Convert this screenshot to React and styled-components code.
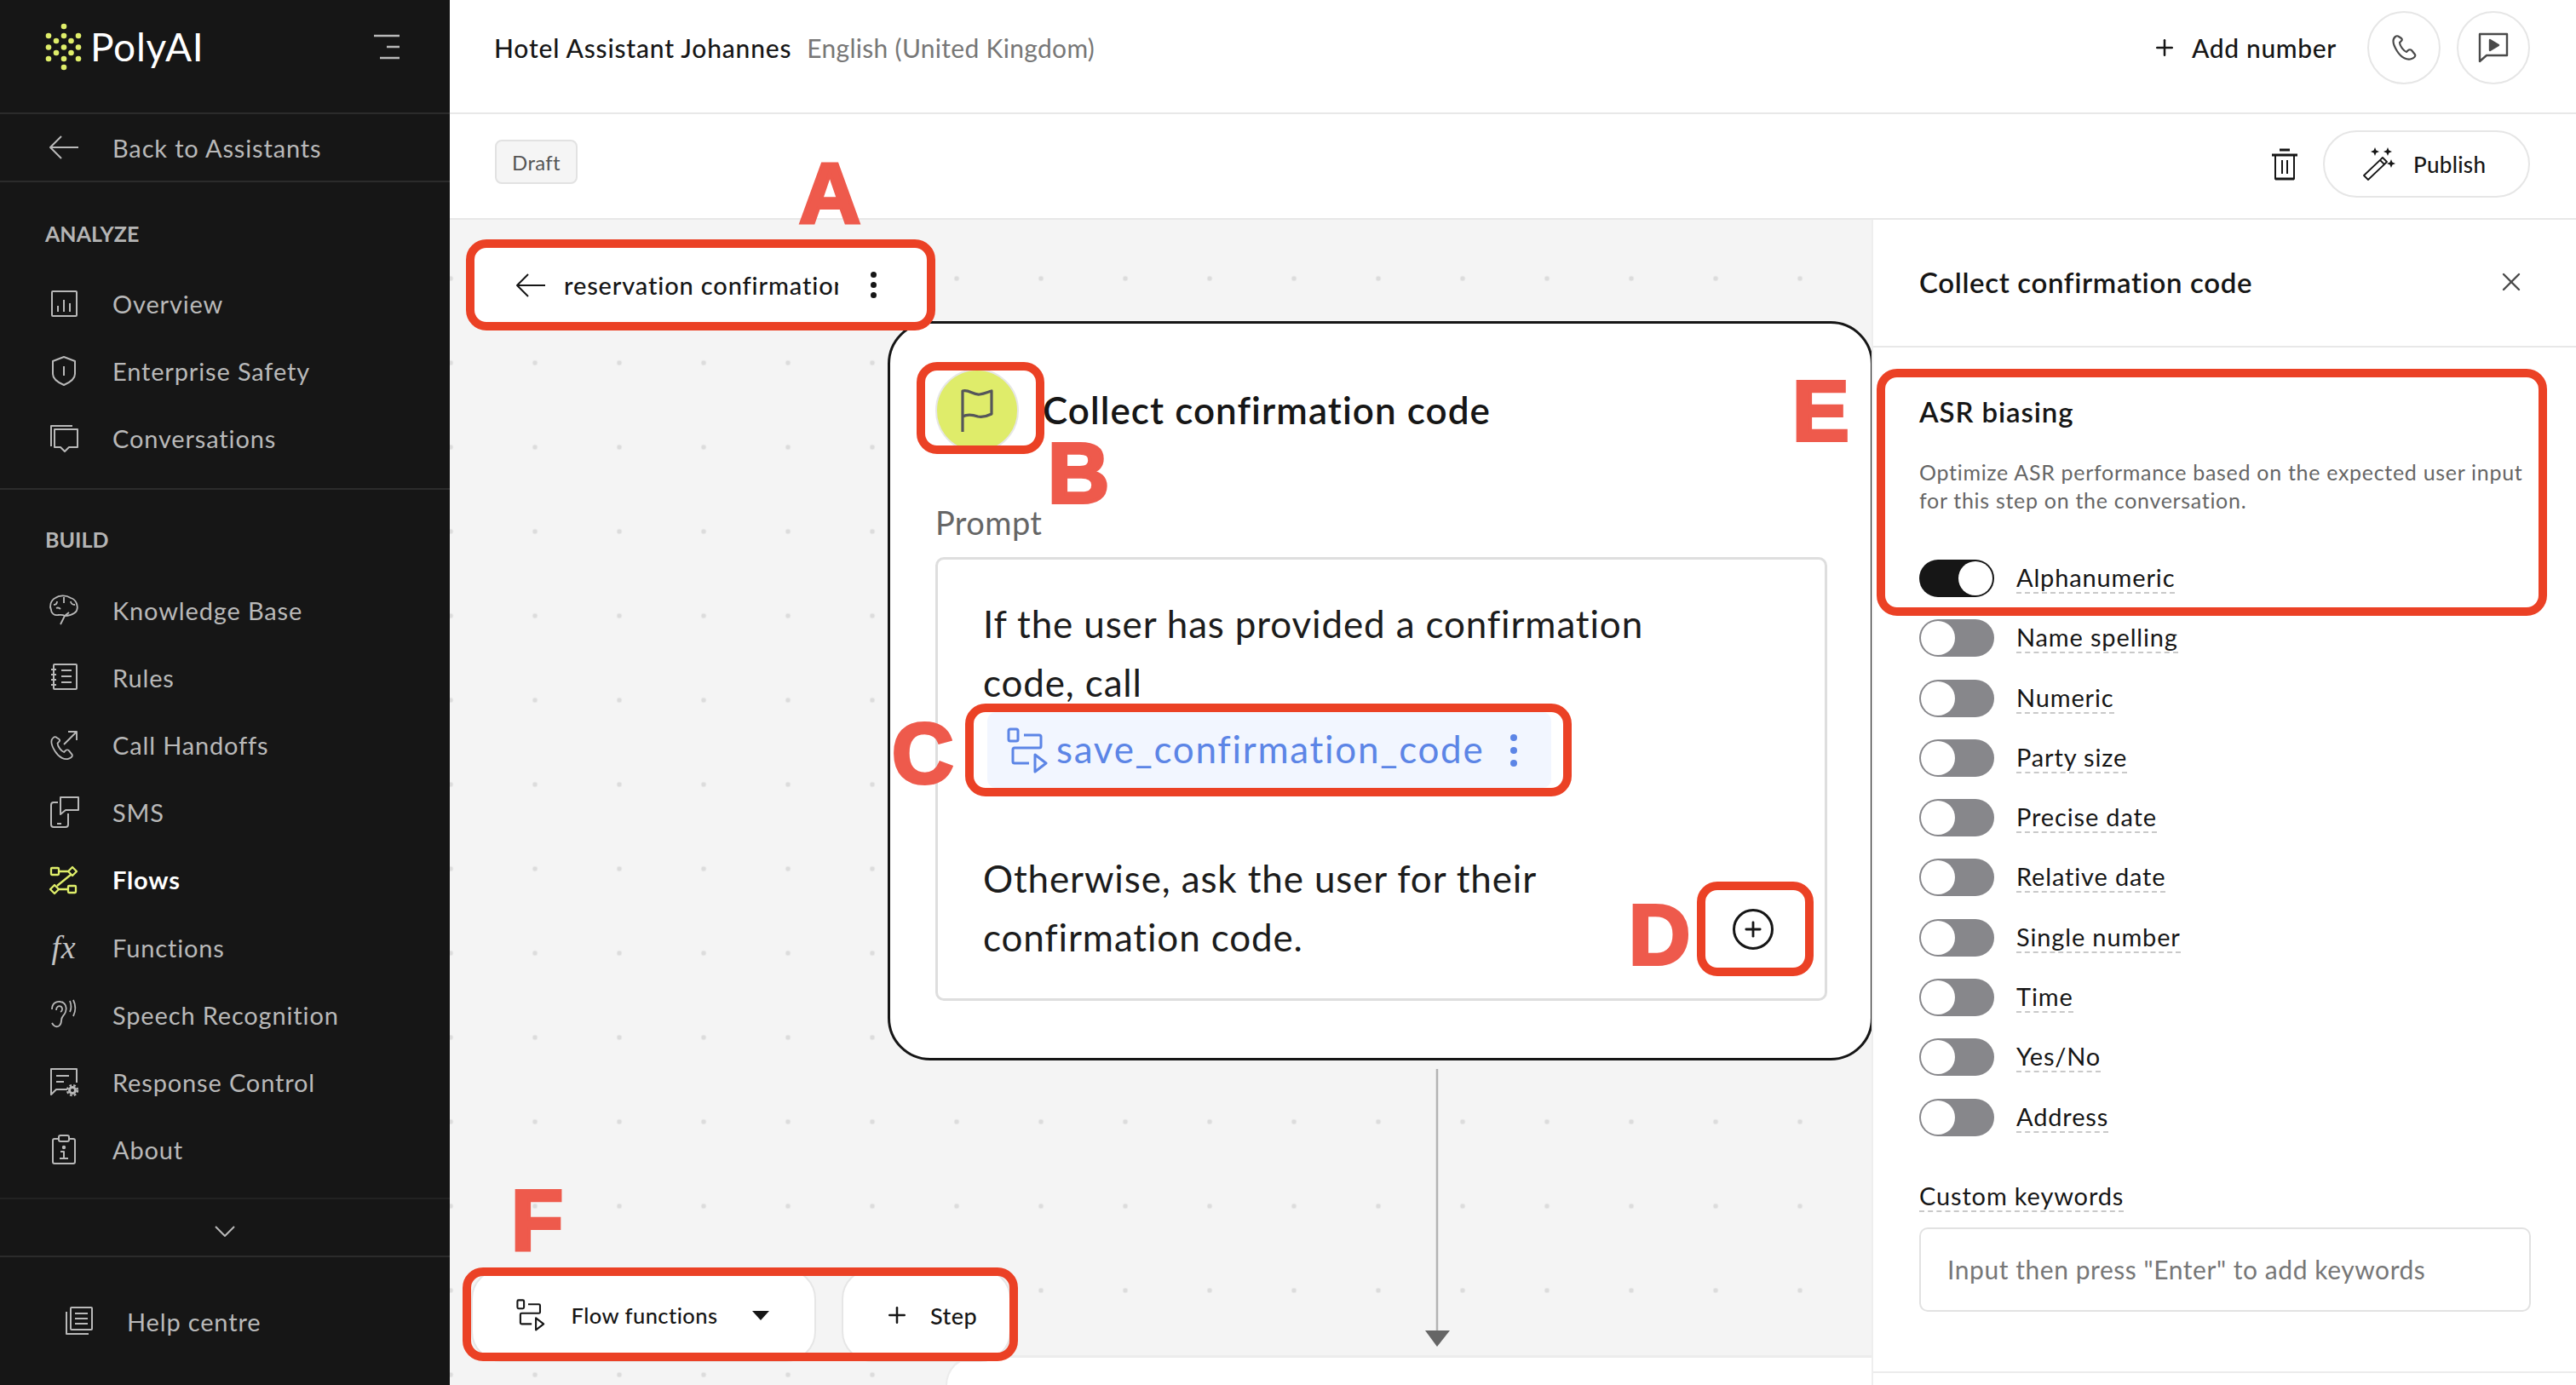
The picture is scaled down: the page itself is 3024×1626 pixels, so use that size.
import React from 'react'
import styled, { createGlobalStyle } from 'styled-components'
import { Plus, X } from 'lucide-react'

const GlobalStyle = createGlobalStyle`
  html, body { margin: 0; padding: 0; background: #fff; }
  * { box-sizing: border-box; }
  body { font-family: Lato, "Open Sans", sans-serif; color: #161616; }
`

const Page = styled.div`
  position: relative;
  width: 3024px;
  height: 1626px;
  display: flex;
  overflow: hidden;
`

// Sidebar
const Sidebar = styled.aside`
  width: 528px;
  flex: none;
  background: #161616;
  display: flex;
  flex-direction: column;
  color: #b9b9b9;
`
const Brand = styled.div`
  height: 134px;
  flex: none;
  padding: 0 58px 22px 50px;
  display: flex;
  align-items: center;
  justify-content: space-between;
  border-bottom: 2px solid #2b2b2b;
`
const BrandLeft = styled.div`
  display: flex;
  align-items: center;
  gap: 6px;
`
const BrandName = styled.div`
  font-size: 46px;
  color: #fff;
  letter-spacing: 0.7px;
  line-height: 1;
`
const BackRow = styled.div`
  height: 80px;
  flex: none;
  display: flex;
  align-items: center;
  gap: 39px;
  padding-left: 57px;
  border-bottom: 2px solid #2b2b2b;
  font-size: 29px;
  letter-spacing: 0.85px;
`
const NavSection = styled.div`
  flex: none;
  padding: ${p => p.$top}px 0 ${p => p.$bottom}px;
  border-bottom: 2px solid ${p => p.$line || '#2b2b2b'};
`
const SectionTitle = styled.div`
  height: 40px;
  line-height: 40px;
  padding-left: 53px;
  margin-bottom: ${p => p.$gap}px;
  font-size: 25px;
  font-weight: 700;
  color: #b4b4b4;
`
const NavRow = styled.div`
  height: 79.2px;
  display: flex;
  align-items: center;
  gap: 39px;
  padding-left: 57px;
  font-size: 29px;
  letter-spacing: 0.85px;
  color: ${p => (p.$active ? '#fff' : '#b9b9b9')};
  font-weight: ${p => (p.$active ? 700 : 400)};
`
const IconBox = styled.span`
  width: 36px;
  height: 36px;
  flex: none;
  display: flex;
  align-items: center;
  justify-content: center;
  color: ${p => p.$color || 'inherit'};
`
const FxGlyph = styled.span`
  font-family: "Liberation Serif", serif;
  font-style: italic;
  font-size: 38px;
  line-height: 36px;
  color: #c4c4c4;
`
const MoreRow = styled.div`
  height: 68px;
  flex: none;
  padding-top: 10px;
  display: flex;
  align-items: center;
  justify-content: center;
  border-bottom: 2px solid #2b2b2b;
`
const HelpRow = styled.div`
  flex: 1;
  display: flex;
  align-items: center;
  gap: 38px;
  padding-left: 75px;
  font-size: 29px;
  letter-spacing: 0.85px;
`

// Main column
const Main = styled.main`
  flex: 1;
  min-width: 0;
  display: flex;
  flex-direction: column;
`
const TopBar = styled.header`
  height: 134px;
  flex: none;
  display: flex;
  align-items: center;
  justify-content: space-between;
  padding: 0 54px 20px 52px;
  border-bottom: 2px solid #e8e8e8;
`
const TopLeft = styled.div`
  display: flex;
  align-items: baseline;
  gap: 18px;
`
const AssistantName = styled.span`
  font-size: 30px;
  font-weight: 500;
  letter-spacing: 0.8px;
`
const Locale = styled.span`
  font-size: 30px;
  color: #777;
  letter-spacing: 0.3px;
`
const TopRight = styled.div`
  display: flex;
  align-items: center;
`
const AddNumber = styled.div`
  display: flex;
  align-items: center;
  gap: 17px;
  margin-right: 36px;
  font-size: 30px;
  font-weight: 500;
  letter-spacing: 0.65px;
`
const RoundButton = styled.div`
  width: 86px;
  height: 86px;
  margin-left: ${p => p.$gap || 0}px;
  border: 2px solid #e6e6e6;
  border-radius: 50%;
  display: flex;
  align-items: center;
  justify-content: center;
  color: #4a4a4a;
`
const DraftBar = styled.div`
  height: 124px;
  flex: none;
  display: flex;
  align-items: center;
  justify-content: space-between;
  padding: 0 54px 10px 53px;
  border-bottom: 2px solid #e8e8e8;
`
const DraftTag = styled.div`
  width: 97px;
  height: 52px;
  background: #f5f5f5;
  border: 2px solid #e2e2e2;
  border-radius: 8px;
  display: flex;
  align-items: center;
  justify-content: center;
  font-size: 24px;
  color: #555;
  letter-spacing: 0.3px;
`
const DraftActions = styled.div`
  display: flex;
  align-items: center;
  gap: 30px;
  margin-top: 5px;
`
const PublishButton = styled.div`
  width: 243px;
  height: 79px;
  border: 2px solid #e6e6e6;
  border-radius: 40px;
  display: flex;
  align-items: center;
  gap: 20px;
  padding-left: 44px;
  font-size: 26px;
  font-weight: 500;
  letter-spacing: 0.3px;
`
const Workspace = styled.div`
  flex: 1;
  min-height: 0;
  display: flex;
`

// Flow canvas, its nodes sit at free positions
const Canvas = styled.div`
  position: relative;
  flex: 1;
  background-color: #f4f4f4;
  background-image: radial-gradient(circle, #dcdcdc 2.6px, transparent 3.2px);
  background-size: 99px 99px;
  background-position: -48.5px 19.5px;
`
const CrumbPill = styled.div`
  position: absolute;
  left: 29px;
  top: 33px;
  width: 531px;
  height: 87px;
  background: #fff;
  border-radius: 14px;
  display: flex;
  align-items: center;
  padding-left: 48px;
`
const CrumbText = styled.span`
  width: 322px;
  margin-left: 21px;
  overflow: hidden;
  white-space: nowrap;
  font-size: 29px;
  font-weight: 500;
  letter-spacing: 0.85px;
`
const CrumbDots = styled.span`
  margin-left: 38px;
  display: flex;
`
const StepCard = styled.section`
  position: absolute;
  left: 514px;
  top: 119px;
  width: 1157px;
  height: 868px;
  background: #fff;
  border: 3px solid #161616;
  border-radius: 50px;
  padding: 53px 52px 0 53px;
`
const CardHead = styled.div`
  display: flex;
  align-items: center;
  gap: 28px;
`
const FlagCircle = styled.div`
  width: 98px;
  height: 98px;
  flex: none;
  border-radius: 50%;
  background: #dfec6a;
  border: 2px solid #e6e6e6;
  display: flex;
  align-items: center;
  justify-content: center;
  color: #55565a;
`
const CardTitle = styled.h2`
  margin: -3px 0 0;
  font-size: 44px;
  font-weight: 600;
  letter-spacing: 1.05px;
`
const PromptLabel = styled.div`
  margin-top: 59px;
  height: 46px;
  line-height: 46px;
  font-size: 38px;
  color: #666;
  letter-spacing: 0.4px;
`
const PromptBox = styled.div`
  position: relative;
  margin-top: 18px;
  width: 1047px;
  height: 521px;
  border: 3px solid #dedede;
  border-radius: 10px;
  padding: 41px 0 0 53px;
`
const PromptLine = styled.div`
  height: 69px;
  line-height: 69px;
  font-size: 44px;
  letter-spacing: 0.85px;
  color: #1c1c1c;
  white-space: nowrap;
`
const FunctionChip = styled.div`
  width: 662px;
  height: 89px;
  margin: 0 0 72px 5px;
  background: #f2f6ff;
  border-radius: 10px;
  display: flex;
  align-items: center;
  padding-left: 23px;
  color: #5c85e6;
  font-size: 44px;
  letter-spacing: 1.7px;
`
const ChipLabel = styled.span`
  margin: -3px 31px 0 10px;
`
const AddCircle = styled.div`
  position: absolute;
  left: 933px;
  top: 410px;
  width: 48px;
  height: 48px;
  border: 3px solid #161616;
  border-radius: 50%;
  display: flex;
  align-items: center;
  justify-content: center;
`
const Connector = styled.svg`
  position: absolute;
  left: 1144px;
  top: 997px;
`
const NextCard = styled.div`
  position: absolute;
  left: 582px;
  right: 0;
  top: 1333px;
  bottom: 0;
  background: #fff;
  border-top: 3px solid #ececec;
  border-left: 2px solid #ececec;
  border-top-left-radius: 60px;
`
const ToolPill = styled.div`
  position: absolute;
  left: ${p => p.$left}px;
  top: 1231px;
  width: ${p => p.$width}px;
  height: 110px;
  background: #fff;
  border: 2px solid #e6e6e6;
  border-radius: 36px;
  display: flex;
  align-items: center;
  font-weight: 500;
  letter-spacing: 0.45px;
  padding-left: ${p => p.$pad}px;
`
const ToolLabel = styled.span`
  margin-left: ${p => p.$gap}px;
  font-size: ${p => p.$size}px;
`
const Caret = styled.span`
  margin-left: 40px;
  width: 0;
  height: 0;
  border-left: 10px solid transparent;
  border-right: 10px solid transparent;
  border-top: 11px solid #161616;
`

// Settings panel
const Panel = styled.aside`
  position: relative;
  width: 827px;
  flex: none;
  background: #fff;
  border-left: 2px solid #eee;
`
const PanelHead = styled.div`
  height: 150px;
  padding: 0 58px 3px 54px;
  display: flex;
  align-items: center;
  justify-content: space-between;
  border-bottom: 2px solid #e8e8e8;
  color: #4a4a4a;
`
const PanelTitle = styled.span`
  color: #161616;
  font-size: 33px;
  font-weight: 600;
  letter-spacing: 0.65px;
`
const PanelBody = styled.div`
  height: 1204px;
  padding: 57px 54px 0;
  border-bottom: 2px solid #ececec;
`
const PanelHeading = styled.h3`
  margin: 0;
  font-size: 33px;
  line-height: 36px;
  font-weight: 600;
  letter-spacing: 0.9px;
`
const PanelText = styled.p`
  margin: 37px 0 53px;
  font-size: 25px;
  line-height: 33px;
  color: #666;
  letter-spacing: 0.7px;
`
const ToggleList = styled.div`
  display: flex;
  flex-direction: column;
  gap: 26.3px;
`
const ToggleRow = styled.div`
  display: flex;
  align-items: center;
  gap: 26px;
  height: 44px;
`
const Toggle = styled.span`
  width: 88px;
  height: 44px;
  flex: none;
  padding: 2px;
  border-radius: 22px;
  background: ${p => (p.$on ? '#161616' : '#87878b')};
  display: flex;
  justify-content: ${p => (p.$on ? 'flex-end' : 'flex-start')};
  &::after {
    content: '';
    width: 40px;
    height: 40px;
    border-radius: 50%;
    background: #fff;
  }
`
const DashedLabel = styled.span`
  display: inline-block;
  font-size: 29px;
  line-height: 34px;
  letter-spacing: 0.85px;
  border-bottom: 2px dashed #c9c9c9;
`
const KeywordsLabel = styled.div`
  margin-top: 53px;
  height: 54px;
`
const KeywordsInput = styled.div`
  width: 718px;
  height: 99px;
  border: 2px solid #e2e2e2;
  border-radius: 10px;
  display: flex;
  align-items: center;
  padding-left: 31px;
  font-size: 30px;
  letter-spacing: 0.55px;
  color: #777;
`

// Red review marks drawn over the screenshot
const MarkBox = styled.div`
  position: absolute;
  left: ${p => p.$x}px;
  top: ${p => p.$y}px;
  width: ${p => p.$w}px;
  height: ${p => p.$h}px;
  border: 10px solid #eb4125;
  border-radius: 24px;
  pointer-events: none;
`
const MarkLetter = styled.span`
  position: absolute;
  left: ${p => p.$x}px;
  top: ${p => p.$y - 13}px;
  font-family: "Liberation Sans", sans-serif;
  font-size: 100px;
  line-height: 100px;
  font-weight: 700;
  color: #ee5a4c;
  -webkit-text-stroke: 4px #ee5a4c;
`

const Svg = styled.svg`
  display: block;
  fill: none;
  stroke: currentColor;
  stroke-width: ${p => p.$sw || 2};
  stroke-linejoin: round;
`

const I = ({ w = 36, h = 36, vb, sw, children }) => (
  <Svg width={w} height={h} viewBox={vb || `0 0 ${w} ${h}`} $sw={sw}>{children}</Svg>
)

const LOGO_DOTS = [
  [25, 5], [7, 16], [25, 16], [42, 16], [16, 22], [33.5, 22], [7, 29.5], [25, 29.5], [42, 29.5],
  [16, 36], [33.5, 36], [7, 43], [25, 43], [42, 43], [25, 53],
]

const HANDSET = 'M5 2C1 5 2 11 7 19C12 27 19 30 24 28C27 27 29 25 28 23L24 18C23 17 21 17 20 18L18 20C15 19 10 13 10 9L12 7C13 6 13 5 12 4L9 2C8 1 6 1 5 2Z'

const Logo = () => (
  <svg width="50" height="58" viewBox="0 0 50 58">
    {LOGO_DOTS.map(([x, y]) => <circle key={`${x}-${y}`} cx={x} cy={y} r="3.3" fill="#dfee6a" />)}
  </svg>
)

const Hamburger = () => (
  <I w={32} h={30} sw={2.6}>
    <path d="M1 2H31M16 15H31M8 28H31" />
  </I>
)

const ArrowLeftIcon = () => (
  <I w={36} h={28} sw={2}>
    <path d="M35 14H2M15 1L2 14L15 27" />
  </I>
)

const ChartIcon = () => (
  <I><rect x="4" y="3" width="29" height="29" rx="1" /><path d="M11 20V27M18 13V27M25 17V27" /></I>
)
const ShieldIcon = () => (
  <I><path d="M18 1L31 6V21C31 27 25 31 18 34C11 31 5 27 5 21V6Z" /><path d="M18 12V23" /></I>
)
const ChatsIcon = () => (
  <I><path d="M3 27V3H28" /><path d="M7 7H34V28H24L19 33L14 28H7Z" /></I>
)
const BrainIcon = () => (
  <I sw={1.8}>
    <path d="M14 35L19 25C22 25 30 24 33 19C35 14 33 6 26 4C20 0 12 1 8 4C2 7 1 14 3 18C3 22 7 25 11 24C14 24 16 23 19 25L24 21" />
    <path d="M10 8C10 11 8 12 6 12M18 3V10M26 8C26 10 28 12 31 12M9 16C11 15 13 16 14 17" />
  </I>
)
const NotebookIcon = () => (
  <I>
    <rect x="6" y="3" width="27" height="29" rx="1" />
    <path d="M3 9H9M3 15H9M3 21H9M3 27H9M15 10H27M15 17H27M15 24H27" />
  </I>
)
const CallOutIcon = () => (
  <I sw={1.9}>
    <path d={HANDSET} transform="translate(1 7) scale(0.95)" />
    <path d="M18 17L33 2M23 2H33V12" />
  </I>
)
const SmsIcon = () => (
  <I h={38} vb="0 0 36 38">
    <path d="M11 7H6Q3 7 3 10V33Q3 36 6 36H20Q23 36 23 33V20" />
    <path d="M14 1H35V16H20L14 21Z" />
    <path d="M10 32H15" />
  </I>
)
const FlowsIcon = () => (
  <I sw={2.3}>
    <rect x="3" y="4" width="9" height="8" rx="1" />
    <path d="M12 8H24M28 3L33 8L28 13L23 8ZM26 12L10 25M12 29H23M7 24L12 29L7 34L2 29Z" />
    <rect x="23" y="25" width="9" height="8" rx="1" />
  </I>
)
const EarIcon = () => (
  <I sw={1.8}>
    <path d="M4 12C4 5 9 2 14 3C20 4 22 10 20 15C18 20 15 20 15 25C15 31 11 33 8 32C6 31 5 30 4 28" />
    <path d="M9 13C9 9 12 7 15 9C17 11 16 14 14 15M25 2C27 7 27 11 25 15M29 1C32 7 32 14 29 20" />
  </I>
)
const ResponseIcon = () => (
  <I>
    <path d="M22 27H9L3 33V3H33V19" />
    <path d="M9 11H24M9 18H18" />
    <circle cx="28" cy="28" r="3.5" strokeWidth="3" />
    <circle cx="28" cy="28" r="6" strokeWidth="2.4" strokeDasharray="2.6 2.2" />
  </I>
)
const ClipboardIcon = () => (
  <I>
    <rect x="5" y="5" width="26" height="29" rx="2" />
    <rect x="12" y="1" width="12" height="7" rx="2" fill="#161616" />
    <path d="M14 20H18V28M13 28H23" />
    <circle cx="18" cy="15" r="1.2" fill="currentColor" />
  </I>
)
const ArticleIcon = () => (
  <I>
    <path d="M3 7V33H29" />
    <rect x="8" y="2" width="25" height="26" rx="1" />
    <path d="M13 9H28M13 15H28M13 21H28" />
  </I>
)
const Chevron = () => (
  <I w={24} h={14} sw={2}>
    <path d="M1 1L12 12L23 1" />
  </I>
)
const PhoneIcon = () => (
  <I w={30} h={30} sw={2.2}>
    <path d={HANDSET} />
  </I>
)
const PlayBubbleIcon = () => (
  <I w={36} h={36} sw={2.4}>
    <path d="M2 2H34V27H10L2 34Z" />
    <path d="M14 9L24 15L14 21Z" fill="currentColor" />
  </I>
)
const TrashIcon = () => (
  <I w={30} h={38} sw={3}>
    <path d="M9 2H21M0 8H30" />
    <path d="M4 9V36H26V9M12 14V30M18 14V30" strokeWidth="2" />
    <path d="M4 36H26" />
  </I>
)
const WandIcon = () => (
  <I w={40} h={40} sw={1.8}>
    <path d="M2 33L24 12L29 17L7 38Z" />
    <path d="M21 15L26 20" />
    <g fill="currentColor" stroke="none">
      <path d="M15 0L16.4 3.6L20 5L16.4 6.4L15 10L13.6 6.4L10 5L13.6 3.6Z" />
      <path d="M30 0L31.4 3.6L35 5L31.4 6.4L30 10L28.6 6.4L25 5L28.6 3.6Z" />
      <path d="M34 14L35.4 17.6L39 19L35.4 20.4L34 24L32.6 20.4L29 19L32.6 17.6Z" />
    </g>
  </I>
)
const FlagIcon = () => (
  <I w={42} h={52} sw={3.2}>
    <path d="M4 51V3C12 1 16 8 24 7C30 6 34 4 38 3V30C32 33 28 34 22 33C16 31 10 30 4 33" />
  </I>
)
const FunctionIcon = ({ size = 1 }) => (
  <I w={48 * size} h={54 * size} vb="0 0 48 54" sw={3}>
    <rect x="2" y="2" width="11" height="14" rx="2" />
    <path d="M20 9H38Q40 9 40 11V22Q40 24 38 24H9Q7 24 7 26V40Q7 42 9 42H26" />
    <path d="M33 32L46 42L33 52Z" />
  </I>
)
const VerticalDots = ({ r = 3, gap = 14, color = 'currentColor' }) => (
  <svg width={r * 2} height={gap * 2 + r * 2} fill={color}>
    <circle cx={r} cy={r} r={r} />
    <circle cx={r} cy={gap + r} r={r} />
    <circle cx={r} cy={gap * 2 + r} r={r} />
  </svg>
)

const ANALYZE = [
  ['Overview', ChartIcon],
  ['Enterprise Safety', ShieldIcon],
  ['Conversations', ChatsIcon],
]

const BUILD = [
  ['Knowledge Base', BrainIcon],
  ['Rules', NotebookIcon],
  ['Call Handoffs', CallOutIcon],
  ['SMS', SmsIcon],
  ['Flows', FlowsIcon, true],
  ['Functions', () => <FxGlyph>fx</FxGlyph>],
  ['Speech Recognition', EarIcon],
  ['Response Control', ResponseIcon],
  ['About', ClipboardIcon],
]

const BIASES = ['Name spelling', 'Numeric', 'Party size', 'Precise date', 'Relative date', 'Single number', 'Time', 'Yes/No', 'Address']

const MARK_BOXES = [
  [547, 281, 551, 107],
  [1076, 425, 150, 108],
  [1133, 826, 712, 109],
  [1992, 1035, 137, 111],
  [2203, 433, 787, 290],
  [543, 1488, 652, 110],
]

const MARK_LETTERS = [
  ['A', 938, 190],
  ['B', 1230, 518],
  ['C', 1047, 847],
  ['D', 1912, 1060],
  ['E', 2104, 445],
  ['F', 600, 1395],
]

const NavItem = ({ label, Icon, active }) => (
  <NavRow $active={active}>
    <IconBox $color={active ? '#dfee6a' : undefined}><Icon /></IconBox>
    {label}
  </NavRow>
)

export default function App() {
  return (
    <Page>
      <GlobalStyle />
      <Sidebar>
        <Brand>
          <BrandLeft>
            <Logo />
            <BrandName>PolyAI</BrandName>
          </BrandLeft>
          <Hamburger />
        </Brand>
        <BackRow>
          <IconBox><ArrowLeftIcon /></IconBox>
          Back to Assistants
        </BackRow>
        <NavSection $top={40} $bottom={18}>
          <SectionTitle $gap={23}>ANALYZE</SectionTitle>
          {ANALYZE.map(([label, Icon]) => <NavItem key={label} label={label} Icon={Icon} />)}
        </NavSection>
        <NavSection $top={38} $bottom={17} $line="#222">
          <SectionTitle $gap={24}>BUILD</SectionTitle>
          {BUILD.map(([label, Icon, active]) => <NavItem key={label} label={label} Icon={Icon} active={active} />)}
        </NavSection>
        <MoreRow><Chevron /></MoreRow>
        <HelpRow>
          <IconBox><ArticleIcon /></IconBox>
          Help centre
        </HelpRow>
      </Sidebar>

      <Main>
        <TopBar>
          <TopLeft>
            <AssistantName>Hotel Assistant Johannes</AssistantName>
            <Locale>English (United Kingdom)</Locale>
          </TopLeft>
          <TopRight>
            <AddNumber><Plus size={30} strokeWidth={2} />Add number</AddNumber>
            <RoundButton><PhoneIcon /></RoundButton>
            <RoundButton $gap={19}><PlayBubbleIcon /></RoundButton>
          </TopRight>
        </TopBar>
        <DraftBar>
          <DraftTag>Draft</DraftTag>
          <DraftActions>
            <TrashIcon />
            <PublishButton><WandIcon />Publish</PublishButton>
          </DraftActions>
        </DraftBar>
        <Workspace>
          <Canvas>
            <NextCard />
            <CrumbPill>
              <ArrowLeftIcon />
              <CrumbText>reservation confirmation</CrumbText>
              <CrumbDots><VerticalDots r={3.5} gap={12} /></CrumbDots>
            </CrumbPill>
            <StepCard>
              <CardHead>
                <FlagCircle><FlagIcon /></FlagCircle>
                <CardTitle>Collect confirmation code</CardTitle>
              </CardHead>
              <PromptLabel>Prompt</PromptLabel>
              <PromptBox>
                <PromptLine>If the user has provided a confirmation</PromptLine>
                <PromptLine>code, call</PromptLine>
                <FunctionChip>
                  <FunctionIcon />
                  <ChipLabel>save_confirmation_code</ChipLabel>
                  <VerticalDots r={4} gap={15} />
                </FunctionChip>
                <PromptLine>Otherwise, ask the user for their</PromptLine>
                <PromptLine>confirmation code.</PromptLine>
                <AddCircle><Plus size={28} strokeWidth={2.4} /></AddCircle>
              </PromptBox>
            </StepCard>
            <Connector width="32" height="326" viewBox="0 0 32 326">
              <path d="M15 0V310" stroke="#b3b3b3" strokeWidth="2.5" fill="none" />
              <path d="M1 307H30L15 326Z" fill="#666" />
            </Connector>
            <ToolPill $left={25} $width={405} $pad={51}>
              <FunctionIcon size={0.7} />
              <ToolLabel $gap={31} $size={25.5}>Flow functions</ToolLabel>
              <Caret />
            </ToolPill>
            <ToolPill $left={460} $width={199} $pad={48}>
              <Plus size={30} strokeWidth={2} />
              <ToolLabel $gap={24} $size={27}>Step</ToolLabel>
            </ToolPill>
          </Canvas>
          <Panel>
            <PanelHead>
              <PanelTitle>Collect confirmation code</PanelTitle>
              <X size={36} strokeWidth={1.6} />
            </PanelHead>
            <PanelBody>
              <PanelHeading>ASR biasing</PanelHeading>
              <PanelText>
                Optimize ASR performance based on the expected user input<br />
                for this step on the conversation.
              </PanelText>
              <ToggleList>
                <ToggleRow>
                  <Toggle $on />
                  <DashedLabel>Alphanumeric</DashedLabel>
                </ToggleRow>
                {BIASES.map(label => (
                  <ToggleRow key={label}>
                    <Toggle />
                    <DashedLabel>{label}</DashedLabel>
                  </ToggleRow>
                ))}
              </ToggleList>
              <KeywordsLabel><DashedLabel>Custom keywords</DashedLabel></KeywordsLabel>
              <KeywordsInput>Input then press "Enter" to add keywords</KeywordsInput>
            </PanelBody>
          </Panel>
        </Workspace>
      </Main>

      {MARK_BOXES.map(([x, y, w, h]) => <MarkBox key={`${x}-${y}`} $x={x} $y={y} $w={w} $h={h} />)}
      {MARK_LETTERS.map(([letter, x, y]) => <MarkLetter key={letter} $x={x} $y={y}>{letter}</MarkLetter>)}
    </Page>
  )
}
